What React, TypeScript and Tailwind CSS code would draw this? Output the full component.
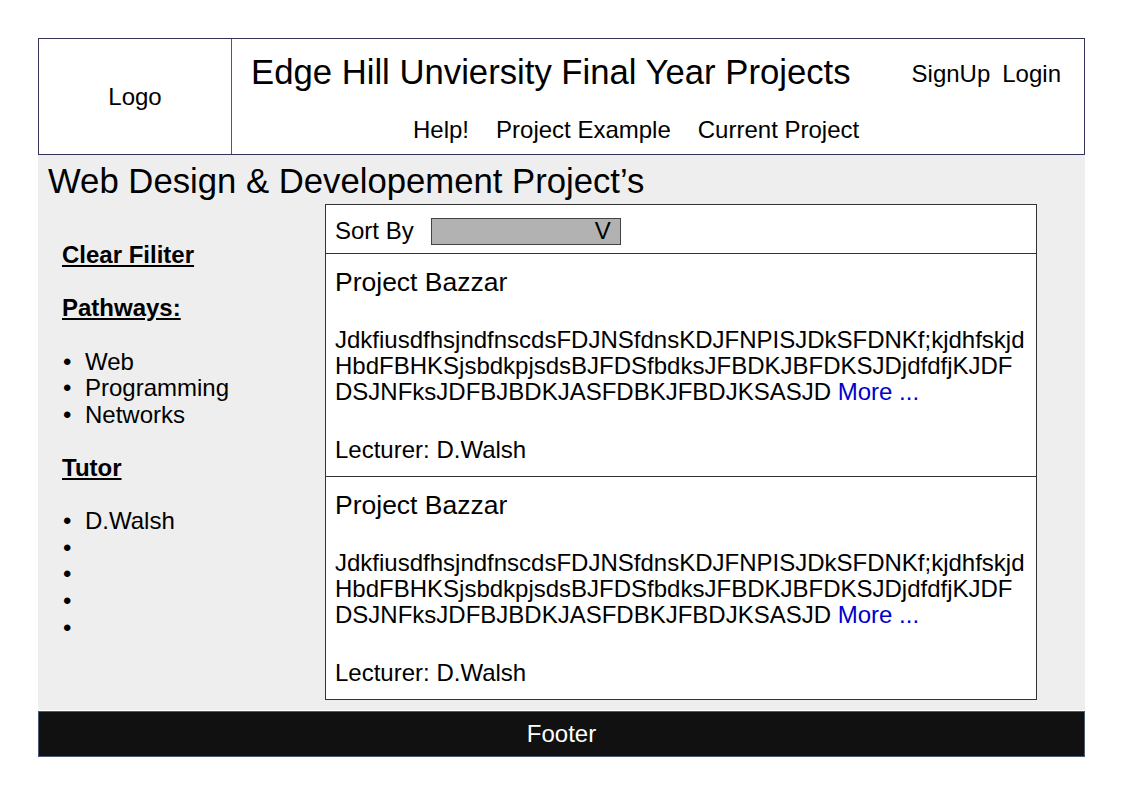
import React from 'react'

const font = { fontFamily: '"Liberation Sans", Arial, sans-serif' }

const Bullet = ({ children }: { children?: React.ReactNode }) => (
  <div className="flex h-[26.6px] items-center">
    <span className="w-[23px] pl-[1px]">•</span>
    <span>{children}</span>
  </div>
)

const Gap = () => <div className="h-[26.6px]" />

const ProjectItem = ({ last }: { last?: boolean }) => (
  <div className={`px-[9px] pt-[13px] pb-[13px] ${last ? '' : 'border-b border-[#333]'}`}>
    <h3 className="text-[26.5px] leading-[30px]">Project Bazzar</h3>
    <p className="mt-[30px] text-[24px] leading-[26px] break-all">
      JdkfiusdfhsjndfnscdsFDJNSfdnsKDJFNPISJDkSFDNKf;kjdhfskjd
      <br />
      HbdFBHKSjsbdkpjsdsBJFDSfbdksJFBDKJBFDKSJDjdfdfjKJDF
      <br />
      DSJNFksJDFBJBDKJASFDBKJFBDJKSASJD <a className="text-[#0000cc]">More ...</a>
    </p>
    <p className="mt-[32px] text-[24px] leading-[26px]">Lecturer: D.Walsh</p>
  </div>
)

const App = () => {
  return (
    <div className="w-[1123px] h-[794px] bg-white pt-[38px] pl-[38px] text-black" style={font}>
      <div className="w-[1047px]">
        {/* Header */}
        <header className="flex h-[117px] border border-[#33335a]">
          <div className="flex w-[193px] items-center justify-center border-r border-[#555570] text-[24px]">
            Logo
          </div>
          <div className="flex flex-1 flex-col">
            <div className="flex items-center justify-between pl-[19px] pr-[23px] pt-[12px]">
              <h1 className="text-[34.7px] leading-[40px]">Edge Hill Unviersity Final Year Projects</h1>
              <div className="flex gap-[12px] pt-[5px] text-[24px]">
                <span>SignUp</span>
                <span>Login</span>
              </div>
            </div>
            <nav className="mt-[25px] flex gap-[27px] pl-[181px] text-[24px] leading-[26px]">
              <span>Help!</span>
              <span>Project Example</span>
              <span>Current Project</span>
            </nav>
          </div>
        </header>

        {/* Main */}
        <main className="h-[555px] bg-[#eeeeee] pt-[7px]">
          <h2 className="pl-[10px] text-[34.7px] leading-[38px]">Web Design &amp; Developement Project’s</h2>
          <div className="mt-[4px] flex">
            <aside className="w-[287px] pl-[24px] pt-[38px] text-[24px]">
              <div className="flex h-[26.6px] items-center font-bold underline">Clear Filiter</div>
              <Gap />
              <div className="flex h-[26.6px] items-center font-bold underline">Pathways:</div>
              <Gap />
              <Bullet>Web</Bullet>
              <Bullet>Programming</Bullet>
              <Bullet>Networks</Bullet>
              <Gap />
              <div className="flex h-[26.6px] items-center font-bold underline">Tutor</div>
              <Gap />
              <Bullet>D.Walsh</Bullet>
              <Bullet />
              <Bullet />
              <Bullet />
              <Bullet />
            </aside>
            <section className="w-[712px] border border-[#333] bg-white">
              <div className="flex h-[49px] items-center gap-[17px] border-b border-[#333] pl-[9px] pt-[4px] text-[24px]">
                <span>Sort By</span>
                <div className="flex h-[27px] w-[190px] items-center justify-end border border-[#444] bg-[#b2b2b2] pr-[9px]">
                  V
                </div>
              </div>
              <ProjectItem />
              <ProjectItem last />
            </section>
          </div>
        </main>

        {/* Footer */}
        <footer className="mt-[1px] flex h-[46px] items-center justify-center border border-[#4a5a74] bg-[#111111] text-[24px] text-white">
          Footer
        </footer>
      </div>
    </div>
  )
}

export default App
